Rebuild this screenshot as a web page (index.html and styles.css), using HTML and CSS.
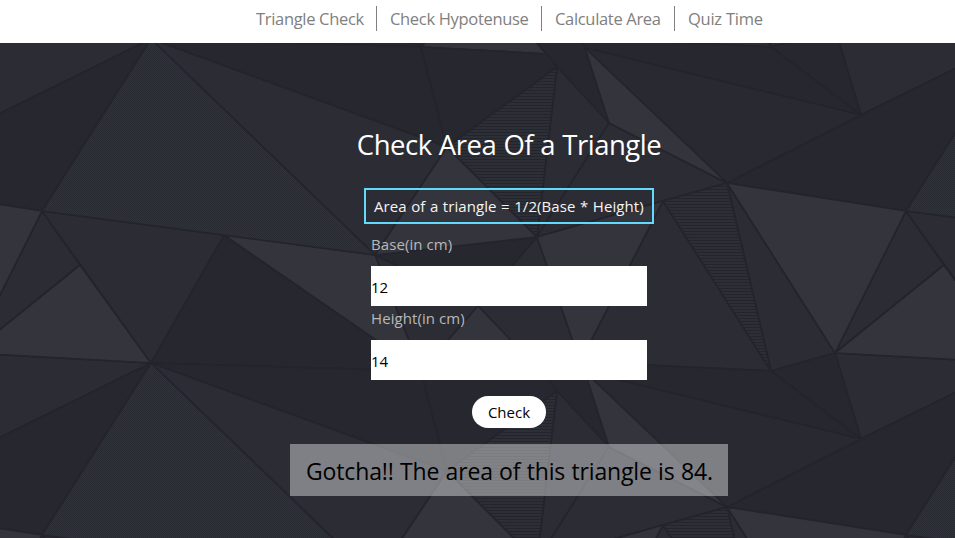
FILE: index.html
```
<!DOCTYPE html>
<html lang="en">
<head>
<meta charset="utf-8">
<title>Triangle Area</title>
<link rel="stylesheet" href="styles.css">
</head>
<body>
<svg class="backdrop" width="955" height="538" viewBox="0 0 955 538" aria-hidden="true">
  <defs>
    <pattern id="dots" width="2" height="2" patternUnits="userSpaceOnUse"><rect width="2" height="2" fill="#30323a"/><rect width="1" height="1" fill="#292b33"/><rect x="1" y="1" width="1" height="1" fill="#292b33"/></pattern>
    <pattern id="lines" width="4" height="3" patternUnits="userSpaceOnUse"><rect width="4" height="3" fill="#2d2f36"/><rect width="4" height="1" fill="#24252c"/></pattern>
    <g id="tile" stroke="#24242d" stroke-width="1.7" stroke-linejoin="round">
      <g fill="#27282f">
        <path d="M151 39L447 147L421 47Z"/>
        <path d="M151 363L421 371L224 235Z"/>
        <path d="M861 115L1015 39L906 211L727 183Z"/>
        <path d="M861 115L835 29L771 47Z"/>
        <path d="M861 115L771 47L580 38L585 48Z"/>
        <path d="M585 48L609 123L557 67L537 43L580 38Z"/>
        <path d="M421 47L547 54L557 67L447 147Z"/>
        <path d="M375 255L537 237L478 306Z"/>
      </g>
      <g fill="#2b2c34">
        <path d="M151 39L375 255L447 147Z"/>
        <path d="M151 363L224 235L42 211Z"/>
        <path d="M906 211L944 265L835 353Z"/>
        <path d="M835 353L1015 363L861 439Z"/>
        <path d="M585 48L861 115L727 183Z" fill="#292a31"/>
        <path d="M557 67L609 123L537 237Z"/>
        <path d="M609 123L727 183L663 201L537 237Z"/>
        <path d="M727 183L835 353L771 371Z"/>
        <path d="M663 201L771 371L580 362Z"/>
        <path d="M537 237L580 362L585 372L557 391L478 306Z"/>
        <path d="M375 255L478 306L421 371Z"/>
      </g>
      <g fill="#33343c">
        <path d="M727 183L906 211L835 353Z"/>
        <path d="M944 265L1015 363L835 353Z"/>
        <path d="M585 48L727 183L609 123Z"/>
        <path d="M537 237L663 201L580 362Z"/>
        <path d="M478 306L547 378L421 371Z"/>
        <path d="M447 147L537 237L375 255Z"/>
        <path d="M224 235L375 255L421 371Z"/>
      </g>
      <path d="M151 39L375 255L42 211Z" fill="url(#dots)"/>
      <path d="M447 147L557 67L537 237Z" fill="url(#lines)"/>
      <path d="M663 201L727 183L771 371Z" fill="url(#lines)"/>
    </g>
  </defs>
  <rect width="955" height="538" fill="#2a2b33"/>
  <use href="#tile" x="-864" y="-324"/><use href="#tile" y="-324"/><use href="#tile" x="864" y="-324"/>
  <use href="#tile" x="-864"/><use href="#tile"/><use href="#tile" x="864"/>
  <use href="#tile" x="-864" y="324"/><use href="#tile" y="324"/><use href="#tile" x="864" y="324"/>
</svg>
<nav class="nav">
  <a class="link l1">Triangle Check</a>
  <a class="link l2">Check Hypotenuse</a>
  <a class="link l3">Calculate Area</a>
  <a class="link l4">Quiz Time</a>
</nav>
<main class="main">
  <h1 class="title">Check Area Of a Triangle</h1>
  <div class="formula">Area of a triangle = 1/2(Base * Height)</div>
  <form class="form">
    <label class="label base" for="base">Base(in cm)</label>
    <input class="input" id="base" value="12">
    <label class="label height" for="height">Height(in cm)</label>
    <input class="input" id="height" value="14">
  </form>
  <button class="check" type="button">Check</button>
  <div class="result">Gotcha!! The area of this triangle is 84.</div>
</main>
</body>
</html>
```
FILE: styles.css
```
* { box-sizing: border-box; }
body { margin: 0; height: 538px; overflow: hidden; background: #2a2b33; font-family: "Open Sans", "Noto Sans", sans-serif; }
.backdrop { position: absolute; inset: 0; z-index: -1; }
.nav { height: 43px; padding: 6px 0 0 243px; background: #fff; display: flex; align-items: flex-start; }
.link { height: 25px; line-height: 26px; font-size: 16.5px; color: #808080; white-space: nowrap; padding-left: 13px; border-right: 1px solid #808080; letter-spacing: -0.32px; }
.l1 { width: 134px; }
.l2 { width: 165px; }
.l3 { width: 133px; }
.l4 { width: 100px; border: 0; letter-spacing: -0.25px; }
.main { width: 438px; margin-left: 290px; display: flex; flex-direction: column; align-items: center; }
.title { margin: 82px 0 0; height: 40px; line-height: 39px; font-size: 27.5px; font-weight: 400; color: #fff; white-space: nowrap; letter-spacing: -0.5px; word-spacing: 0.6px; }
.formula { width: 290px; height: 36px; margin-top: 23px; border: 2px solid #61dafb; padding-left: 8px; line-height: 33px; font-size: 15px; color: #f5f5f5; white-space: nowrap; letter-spacing: 0.08px; word-spacing: 0.5px; }
.form { width: 276px; display: flex; flex-direction: column; }
.label { font-size: 15px; color: #b8b8b8; letter-spacing: 0.08px; line-height: 24px; }
.base { height: 42px; padding-top: 8px; }
.height { height: 34px; }
.input { width: 276px; height: 40px; border: 0; border-radius: 0; padding: 2px 0 0; background: #fff; color: #000; font: 15px "Open Sans", sans-serif; letter-spacing: -0.2px; outline: 0; }
.check { width: 74px; height: 32px; margin-top: 16px; padding: 0; border: 0; border-radius: 16px; background: #fff; color: #000; font: 15px "Open Sans", sans-serif; }
.result { width: 438px; height: 52px; margin-top: 16px; padding-left: 16px; background: rgba(255, 255, 255, 0.4); line-height: 54px; font-size: 23px; color: #000; white-space: nowrap; letter-spacing: -0.15px; word-spacing: 0.5px; }
```
